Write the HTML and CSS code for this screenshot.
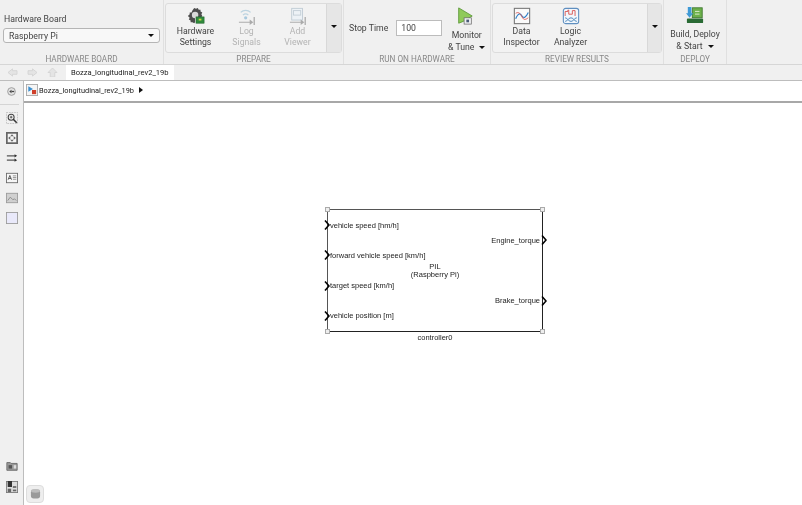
FILE: index.html
```html
<!DOCTYPE html>
<html lang="en">
<head>
    <meta charset="UTF-8">
    <title>Bozza_longitudinal_rev2_19b</title>
    <link rel="stylesheet" href="styles.css">
</head>
<body>
    <div class="ribbon">
        <section class="group group-board">
            <div class="group-body board-body">
                <label class="board-label">Hardware Board</label>
                <div class="board-select"><span>Raspberry Pi</span><i class="caret"></i></div>
            </div>
            <div class="group-name">HARDWARE BOARD</div>
        </section>

        <section class="group group-prepare">
            <div class="group-body panel">
                <div class="tool tool-wide">
                    <svg class="icon" viewBox="0 0 20 20"><path d="M8 1l2 1 2-1 1 2 2 0 0 2 2 1-1 2 1 2-1 1H9v6l-1 1-2-1-2 0 0-2-2-1 1-2-2-2 2-2 0-2 2 0 1-2z" fill="#4d4d4d"/><circle cx="9" cy="9" r="3.6" fill="#d9d9d9"/><rect x="10" y="11" width="9" height="7" fill="#2f8a3c" stroke="#1f5f29" stroke-width=".6"/><rect x="13" y="13" width="3" height="2" fill="#c8d84a"/></svg>
                    <span>Hardware<br>Settings</span>
                </div>
                <div class="tool tool-wide off">
                    <svg class="icon" viewBox="0 0 20 20" fill="none" stroke="#bcd3e0" stroke-width="1.4"><path d="M3 6a8 8 0 0 1 11 0"/><path d="M5.500 9a4.500 4.500 0 0 1 6 0"/><circle cx="8.500" cy="12" r="1.800" fill="#a9c9de" stroke="none"/><path d="M1 17h14" stroke="#bbb"/><path d="M13 14l4 3-4 3z" fill="#aaa" stroke="none"/><path d="M18 11v9" stroke="#aaa"/></svg>
                    <span>Log<br>Signals</span>
                </div>
                <div class="tool tool-wide off">
                    <svg class="icon" viewBox="0 0 20 20" fill="none"><rect x="3" y="1.500" width="12" height="13" fill="#edf2f6" stroke="#bfcbd4"/><rect x="5" y="4" width="8" height="5" stroke="#c3ced6"/><path d="M1 17h14" stroke="#bbb" stroke-width="1.400"/><path d="M13 14l4 3-4 3z" fill="#aaa"/><path d="M18 11v9" stroke="#aaa" stroke-width="1.400"/></svg>
                    <span>Add<br>Viewer</span>
                </div>
                <div class="more"><i class="caret"></i></div>
            </div>
            <div class="group-name">PREPARE</div>
        </section>

        <section class="group group-run">
            <div class="group-body run-body">
                <span class="stop-label">Stop Time</span>
                <div class="stop-input">100</div>
                <div class="tool tool-split">
                    <svg class="icon icon-play" viewBox="0 0 20 20"><path d="M3 1l15 9-10 6-5 2z" fill="#8fca5a" stroke="#5d9a3a"/><rect x="9" y="12" width="8" height="7" fill="#eef0f2" stroke="#666" stroke-width=".8"/><rect x="11.500" y="14" width="3" height="3" fill="#4a5a78"/></svg>
                    <span>Monitor<br>&amp; Tune<i class="caret caret-inline"></i></span>
                </div>
            </div>
            <div class="group-name">RUN ON HARDWARE</div>
        </section>

        <section class="group group-review">
            <div class="group-body panel">
                <div class="tool tool-review">
                    <svg class="icon" viewBox="0 0 20 20" fill="none"><rect x="1.500" y="1.500" width="17" height="17" fill="#fafafa" stroke="#777" stroke-width="1.200"/><path d="M3 13c3-7 5-6 7-3s4 2 7-4" stroke="#2f7fc8" stroke-width="1.300"/><path d="M3 7c3-2 5 0 7 4s4 3 7 1" stroke="#d9534f" stroke-width="1"/></svg>
                    <span>Data<br>Inspector</span>
                </div>
                <div class="tool tool-review">
                    <svg class="icon" viewBox="0 0 20 20" fill="none"><rect x="1.500" y="1.500" width="17" height="17" rx="2.500" fill="#f2f7fc" stroke="#5f8fc0" stroke-width="1.200"/><path d="M3.500 10V5h3V3.500h1V8h4V4h3v6" stroke="#d9534f"/><path d="M3.500 12c3 0 3 4 6.500 4s3-4 6.500-4M3.500 16c3 0 3-4 6.500-4s3 4 6.500 4" stroke="#3f7fb8"/></svg>
                    <span>Logic<br>Analyzer</span>
                </div>
                <div class="more more-review"><i class="caret"></i></div>
            </div>
            <div class="group-name">REVIEW RESULTS</div>
        </section>

        <section class="group group-deploy">
            <div class="group-body">
                <div class="tool tool-split tool-deploy">
                    <svg class="icon" viewBox="0 0 20 20"><rect x="1" y="14" width="18" height="5" rx="1" fill="#2a6b35"/><rect x="7" y="2" width="11" height="11" fill="#6cb04a" stroke="#3f7a30"/><path d="M10 6h5M10 9h5" stroke="#e6f2d8"/><path d="M2 1h4v7h2l-4 5-4-5h2z" fill="#3f9ad6"/></svg>
                    <span>Build, Deploy<br>&amp; Start<i class="caret caret-inline"></i></span>
                </div>
            </div>
            <div class="group-name">DEPLOY</div>
        </section>
    </div>

    <div class="tabs">
        <div class="nav">
            <svg viewBox="0 0 12 10"><path d="M1 5l5-4v2h5v4H6v2z" fill="#e4e4e4" stroke="#d4d4d4"/></svg>
            <svg viewBox="0 0 12 10"><path d="M11 5L6 1v2H1v4h5v2z" fill="#e4e4e4" stroke="#d4d4d4"/></svg>
            <svg viewBox="0 0 12 10"><path d="M6 0l5 5H8.500v5h-5V5H1z" fill="#e4e4e4" stroke="#d4d4d4"/></svg>
        </div>
        <div class="tab">Bozza_longitudinal_rev2_19b</div>
    </div>

    <div class="main">
        <aside class="sidebar">
            <div class="side-top">
                <svg viewBox="0 0 10 10"><circle cx="5" cy="5" r="4.300" fill="#e2e2e2" stroke="#999"/><path d="M2.500 5L5 3v4z" fill="#444"/><path d="M5 4.300h3v1.400H5z" fill="#444"/></svg>
            </div>
            <div class="side-tools">
                <svg viewBox="0 0 14 14" fill="none"><rect x=".5" y=".5" width="13" height="13" stroke="#bbb" stroke-dasharray="2 1"/><circle cx="6" cy="6" r="3.500" fill="#eee" stroke="#444" stroke-width="1.200"/><path d="M4.500 6h3M6 4.500v3" stroke="#444"/><path d="M8.500 8.500l4 4" stroke="#333" stroke-width="1.800"/></svg>
                <svg viewBox="0 0 14 14"><rect width="14" height="14" fill="#666"/><rect x="2" y="2" width="10" height="10" fill="#f4f4f4"/><path d="M7 2.500l2 2.500H5zM7 11.500L5 9h4zM2.500 7L5 5v4zM11.500 7L9 9V5z" fill="#666"/></svg>
                <svg viewBox="0 0 14 14" fill="none" stroke="#555"><path d="M1 4.500h10M1 9.500h10" stroke-width="1.300"/><path d="M10 2.500l3 2-3 2zM10 7.500l3 2-3 2z" fill="#333" stroke="none"/></svg>
                <svg viewBox="0 0 14 14" fill="none"><rect x=".5" y="1.500" width="13" height="11" fill="#f6f6f6" stroke="#666"/><path d="M2.500 9l2-5 2 5M3.200 7.500h2.600" stroke="#333" stroke-width=".9"/><path d="M8 4.500h4M8 6.500h4M8 8.500h4" stroke="#888"/></svg>
                <svg viewBox="0 0 14 14" fill="none"><rect x=".5" y="1.500" width="13" height="11" fill="#d0d0d0" stroke="#999"/><path d="M2 10l3-4 3 3 2-1 2 2" stroke="#888"/></svg>
                <svg viewBox="0 0 14 14"><rect x=".5" y=".5" width="13" height="13" fill="#e9e9fa" stroke="#999"/></svg>
            </div>
            <div class="side-bottom">
                <svg viewBox="0 0 14 12"><path d="M1 2h4l1 1h7v8H1z" fill="#999" stroke="#666"/><rect x="3" y="5" width="4" height="4" fill="#555"/><rect x="9" y="5" width="3" height="4" fill="#ddd"/></svg>
                <svg viewBox="0 0 14 14"><rect x=".5" y=".5" width="13" height="13" fill="#ddd" stroke="#777"/><rect x="2" y="0" width="5" height="7" fill="#333"/><rect x="8" y="6" width="4" height="2" fill="#666"/><rect x="2" y="9" width="4" height="4" fill="#666"/><rect x="8" y="10" width="4" height="2" fill="#666"/></svg>
            </div>
        </aside>

        <div class="workspace">
            <div class="crumb">
                <svg class="crumb-icon" viewBox="0 0 13 13"><rect x=".5" y=".5" width="12" height="12" fill="#f5f5f5" stroke="#aaa"/><path d="M2.500 2.500l5 3-5 3z" fill="#3b8fd0"/><rect x="6.500" y="6.500" width="4.500" height="4.500" fill="#d0402a"/></svg>
                <span>Bozza_longitudinal_rev2_19b</span>
                <i class="crumb-arrow"></i>
            </div>

            <div class="canvas">
                <div class="block">
                    <i class="handle handle-tl"></i><i class="handle handle-tr"></i>
                    <i class="handle handle-bl"></i><i class="handle handle-br"></i>
                    <div class="ports ports-in">
                        <div class="port"><svg class="chev chev-in" viewBox="0 0 6 10"><path d="M1 .5L5 5 1 9.500" fill="none" stroke="#000" stroke-width="1.600"/></svg>vehicle speed [hm/h]</div>
                        <div class="port"><svg class="chev chev-in" viewBox="0 0 6 10"><path d="M1 .5L5 5 1 9.500" fill="none" stroke="#000" stroke-width="1.600"/></svg>forward vehicle speed [km/h]</div>
                        <div class="port"><svg class="chev chev-in" viewBox="0 0 6 10"><path d="M1 .5L5 5 1 9.500" fill="none" stroke="#000" stroke-width="1.600"/></svg>target speed [km/h]</div>
                        <div class="port"><svg class="chev chev-in" viewBox="0 0 6 10"><path d="M1 .5L5 5 1 9.500" fill="none" stroke="#000" stroke-width="1.600"/></svg>vehicle position [m]</div>
                    </div>
                    <div class="block-title">PIL<br>(Raspberry Pi)</div>
                    <div class="ports ports-out">
                        <div class="port">Engine_torque<svg class="chev chev-out" viewBox="0 0 6 10"><path d="M1 .5L5 5 1 9.500" fill="none" stroke="#000" stroke-width="1.600"/></svg></div>
                        <div class="port">Brake_torque<svg class="chev chev-out" viewBox="0 0 6 10"><path d="M1 .5L5 5 1 9.500" fill="none" stroke="#000" stroke-width="1.600"/></svg></div>
                    </div>
                    <div class="block-name">controller0</div>
                </div>
                <div class="db-badge">
                    <svg viewBox="0 0 12 13"><rect x="1" y="1.500" width="10" height="10" rx="3" fill="#9a9a9a"/><ellipse cx="6" cy="3" rx="5" ry="2" fill="#bdbdbd"/></svg>
                </div>
            </div>
        </div>
    </div>
</body>
</html>
```

FILE: styles.css
```css
* {
    box-sizing: border-box;
}
html, body {
    margin: 0;
    height: 100%;
    overflow: hidden;
}
body {
    width: 802px;
    height: 505px;
    display: flex;
    flex-direction: column;
    font-family: Roboto, "Noto Sans", sans-serif;
    font-size: 8.7px;
    color: #444;
    background: #fff;
}
/* the reference is a slightly soft, rescaled screenshot */
.ribbon, .tabs, .main {
    filter: blur(0.5px);
}
svg {
    display: block;
}

/* ribbon */
.ribbon {
    display: flex;
    height: 65px;
    background: #f0f0f0;
    border-bottom: 1px solid #d6d6d6;
}
.group {
    display: flex;
    flex-direction: column;
    border-right: 1px solid #e0e0e0;
}
.group-body {
    height: 52px;
    display: flex;
    margin-top: 3px;
}
.group-name {
    height: 9px;
    margin-top: 2px;
    line-height: 9px;
    text-align: center;
    font-size: 8.200px;
    color: #888;
}
.group-board { width: 164px; }
.group-prepare { width: 180px; padding: 0 1px; }
.group-run { width: 147px; }
.group-review { width: 173px; padding: 0 1px; }
.group-deploy { width: 63px; }
.panel {
    background: #f2f2f2;
    border: 1px solid #dcdcdc;
    border-radius: 3px;
}
.group-prepare .panel, .group-review .panel {
    padding-left: 4px;
}

.board-body {
    flex-direction: column;
    padding: 10px 3px 0;
}
.board-label {
    line-height: 12px;
    padding-left: 1px;
}
.board-select {
    height: 15px;
    margin-top: 3px;
    display: flex;
    align-items: center;
    justify-content: space-between;
    padding: 0 5px 0 5px;
    background: #f8f8f8;
    border: 1px solid #b5b5b5;
    border-radius: 3px;
}
.caret {
    display: block;
    width: 0;
    height: 0;
    border-left: 3px solid transparent;
    border-right: 3px solid transparent;
    border-top: 3px solid #111;
}
.caret-inline {
    display: inline-block;
    margin-left: 5px;
    vertical-align: 1px;
}

.tool {
    display: flex;
    flex-direction: column;
    align-items: center;
    text-align: center;
    line-height: 11px;
    padding-top: 3px;
}
.tool .icon {
    width: 18px;
    height: 18px;
    margin-bottom: 1px;
}
.tool-wide { width: 51px; }
.off { color: #b4b4b4; }
.more {
    margin-left: auto;
    width: 15px;
    background: #e6e6e6;
    border-left: 1px solid #d8d8d8;
    display: flex;
    align-items: center;
    justify-content: center;
    padding-bottom: 3px;
}
.more-review { width: 14px; }
.tool-review { width: 49px; }

.run-body {
    align-items: flex-start;
    padding: 18px 0 0 5px;
}
.stop-label {
    line-height: 15px;
}
.stop-input {
    width: 46px;
    height: 16px;
    margin: -1px 0 0 8px;
    padding-left: 4px;
    line-height: 14px;
    background: #fff;
    border: 1px solid #bcbcbc;
}
.tool-split {
    padding-top: 0;
    line-height: 12px;
    white-space: nowrap;
}
.run-body .tool-split {
    margin: -14px 0 0 5px;
    width: 39px;
}
.tool-split .icon {
    margin-bottom: 4px;
}
.tool .icon-play {
    margin-right: 4px;
}
.tool-deploy {
    width: 63px;
    padding-top: 3px;
}

/* tab strip */
.tabs {
    display: flex;
    height: 15px;
    background: #f0f0f0;
}
.nav {
    display: flex;
    align-items: center;
    gap: 9px;
    width: 66px;
    padding-left: 7px;
}
.nav svg {
    width: 11px;
    height: 9px;
}
.tab {
    padding: 0 5px;
    line-height: 15px;
    background: #fff;
    color: #222;
    font-size: 7.600px;
}

/* main area */
.main {
    flex: 1;
    display: flex;
    min-height: 0;
}
.sidebar {
    width: 24px;
    display: flex;
    flex-direction: column;
    background: #f0f0f0;
    border-right: 1px solid #bdbdbd;
    border-top: 1px solid #bdbdbd;
}
.side-top {
    height: 24px;
    padding: 6px 0 0 7px;
    border-bottom: 1px solid #d4d4d4;
    margin: 0 4px 0 0;
}
.side-top svg {
    width: 9px;
    height: 9px;
}
.side-tools {
    display: flex;
    flex-direction: column;
    align-items: center;
    gap: 8px;
    padding-top: 7px;
}
.side-tools svg {
    width: 12px;
    height: 12px;
}
.side-bottom {
    margin-top: auto;
    display: flex;
    flex-direction: column;
    align-items: center;
    gap: 9px;
    padding-bottom: 12px;
}
.side-bottom svg {
    width: 12px;
    height: 12px;
}

.workspace {
    flex: 1;
    display: flex;
    flex-direction: column;
    min-width: 0;
}
.crumb {
    height: 23px;
    display: flex;
    align-items: center;
    padding: 0 0 2px 2px;
    border-top: 1px solid #bdbdbd;
    border-bottom: 2px solid #a8a8a8;
    color: #222;
    font-size: 7.400px;
}
.crumb-icon {
    width: 12px;
    height: 12px;
    margin-right: 1px;
}
.crumb-arrow {
    width: 0;
    height: 0;
    margin-left: 5px;
    border-top: 3.500px solid transparent;
    border-bottom: 3.500px solid transparent;
    border-left: 4px solid #111;
}

/* model canvas */
.canvas {
    position: relative;
    flex: 1;
    background: #fff;
}
.block {
    position: absolute;
    left: 303px;
    top: 106px;
    width: 216px;
    height: 123px;
    display: flex;
    justify-content: space-between;
    border: 1.500px solid #555;
    border-bottom-color: #222;
    border-right-color: #222;
    font-family: "Liberation Sans", Arial, sans-serif;
    font-size: 7.500px;
    color: #222;
}
.handle {
    position: absolute;
    width: 5px;
    height: 5px;
    background: #eee;
    border: 1px solid #aaa;
}
.handle-tl { left: -3px; top: -3px; }
.handle-tr { right: -3px; top: -3px; }
.handle-bl { left: -3px; bottom: -3px; }
.handle-br { right: -3px; bottom: -3px; }
.ports {
    display: flex;
    flex-direction: column;
}
.ports-in { padding-left: 2px; }
.ports-out { padding-right: 2px; text-align: right; }
.port {
    position: relative;
    flex: 1;
    display: flex;
    align-items: center;
}
.ports-out .port {
    justify-content: flex-end;
}
.chev {
    position: absolute;
    top: 50%;
    width: 6px;
    height: 10px;
    margin-top: -5px;
}
.chev-in { left: -6px; }
.chev-out { right: -7px; }
.block-title {
    position: absolute;
    left: 0;
    right: 0;
    top: 53px;
    line-height: 8px;
    text-align: center;
}
.block-name {
    position: absolute;
    left: 0;
    right: 0;
    bottom: -11px;
    text-align: center;
    line-height: 9px;
}
.db-badge {
    position: absolute;
    left: 2px;
    bottom: 2px;
    width: 18px;
    height: 18px;
    display: flex;
    align-items: center;
    justify-content: center;
    background: #eee;
    border: 1px solid #ddd;
    border-radius: 4px;
}
.db-badge svg {
    width: 11px;
    height: 12px;
}
```
